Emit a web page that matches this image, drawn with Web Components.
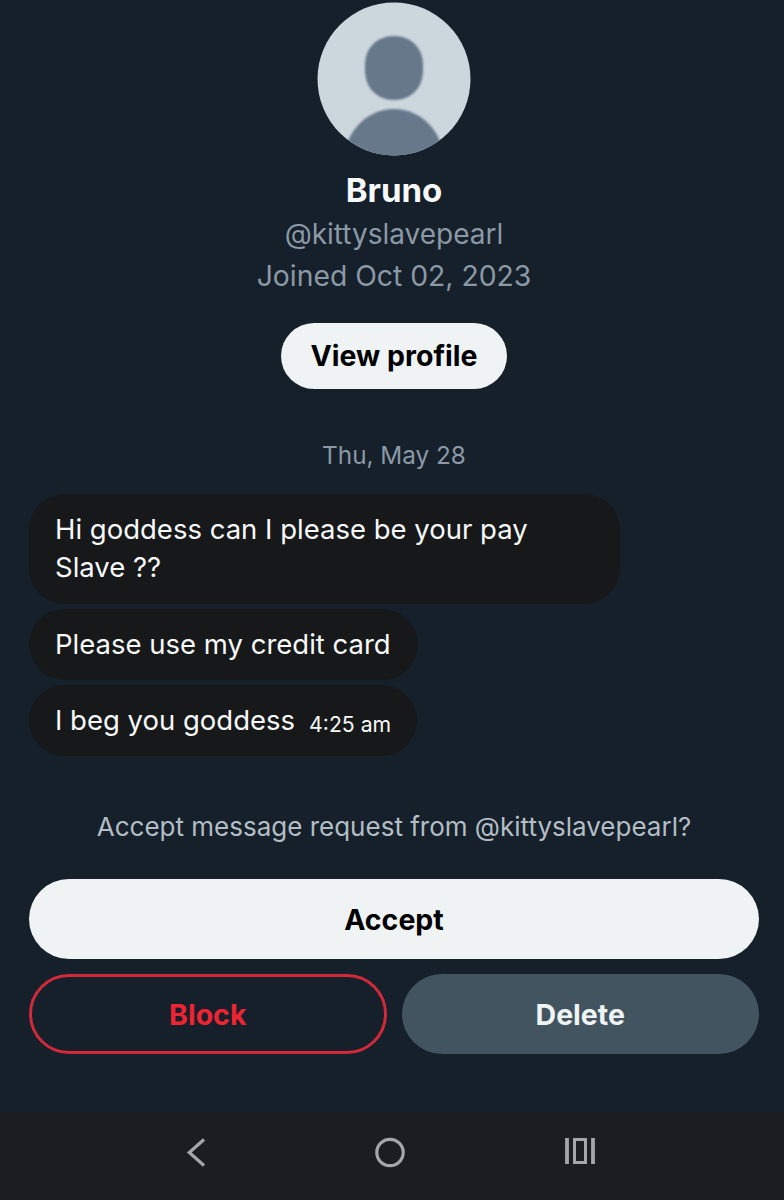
<!DOCTYPE html>
<html>
<head>
<meta charset="utf-8">
<style>
  html, body { margin: 0; padding: 0; }
  body {
    width: 784px;
    height: 1200px;
    overflow: hidden;
    background: #15202b;
    font-family: Inter, "Liberation Sans", sans-serif;
    display: flex;
    flex-direction: column;
  }
</style>
</head>
<body>
<dm-screen>
  <profile-head name="Bruno" handle="@kittyslavepearl" joined="Joined Oct 02, 2023"></profile-head>
  <day-label>Thu, May 28</day-label>
  <message-list>
    <chat-bubble style="width:591px;padding-bottom:18px">Hi goddess can I please be your pay<br>Slave ??</chat-bubble>
    <chat-bubble style="padding-right:27px">Please use my credit card</chat-bubble>
    <chat-bubble time="4:25 am">I beg you goddess</chat-bubble>
  </message-list>
  <request-actions handle="@kittyslavepearl"></request-actions>
</dm-screen>
<nav-bar></nav-bar>

<script>
class DmScreen extends HTMLElement {
  connectedCallback() {
    this.attachShadow({ mode: 'open' });
    this.shadowRoot.innerHTML = `
      <style>
        :host {
          display: flex;
          flex-direction: column;
          height: 1112px;
          box-sizing: border-box;
          padding: 2px 25px 0 29px;
          background: #15202b;
        }
      </style>
      <slot></slot>
    `;
  }
}

class ProfileHead extends HTMLElement {
  connectedCallback() {
    this.attachShadow({ mode: 'open' });
    this.shadowRoot.innerHTML = `
      <style>
        :host { display: flex; flex-direction: column; align-items: center; }
        svg { display: block; width: 154px; height: 154px; }
        .blur { filter: blur(1px); }
        .name { margin-top: 16px; font-size: 33px; line-height: 36px; font-weight: 700; color: #f7f9f9; }
        .sub { font-size: 28px; line-height: 41px; color: #8b98a5; }
        .handle { margin-top: 6px; }
        .joined { margin-top: 1px; font-size: 28.3px; }
        button {
          margin-top: 26px;
          width: 226px;
          height: 66px;
          padding: 0 0 1px;
          border: 0;
          border-radius: 33px;
          background: #eff3f4;
          color: #000;
          font: 700 28.5px Inter, "Liberation Sans", sans-serif;
        }
      </style>
      <svg viewBox="0 0 154 154">
        <defs><clipPath id="c"><circle cx="77" cy="77" r="76.5"/></clipPath></defs>
        <circle cx="77" cy="77" r="76.5" fill="#ccd6dd"/>
        <g clip-path="url(#c)" fill="#66788a">
          <g class="blur">
            <path d="M77 34c17 0 29 12 29 29v5c0 18-12 30-29 30s-29-12-29-30v-5c0-17 12-29 29-29z"/>
            <ellipse cx="77" cy="160" rx="50" ry="53"/>
          </g>
        </g>
      </svg>
      <div class="name">${this.getAttribute('name')}</div>
      <div class="sub handle">${this.getAttribute('handle')}</div>
      <div class="sub joined">${this.getAttribute('joined')}</div>
      <button>View profile</button>
    `;
  }
}

class DayLabel extends HTMLElement {
  connectedCallback() {
    this.attachShadow({ mode: 'open' });
    this.shadowRoot.innerHTML = `
      <style>
        :host {
          display: block;
          margin: 48px 0 21px;
          text-align: center;
          font-size: 24.3px;
          line-height: 36px;
          color: #8b98a5;
        }
      </style>
      <slot></slot>
    `;
  }
}

class MessageList extends HTMLElement {
  connectedCallback() {
    this.attachShadow({ mode: 'open' });
    this.shadowRoot.innerHTML = `
      <style>
        :host { display: flex; flex-direction: column; align-items: flex-start; gap: 5px; }
      </style>
      <slot></slot>
    `;
  }
}

class ChatBubble extends HTMLElement {
  connectedCallback() {
    const time = this.getAttribute('time');
    this.attachShadow({ mode: 'open' });
    this.shadowRoot.innerHTML = `
      <style>
        :host {
          display: block;
          box-sizing: border-box;
          padding: 16px 26px 17px;
          border-radius: 36px;
          background: #16181a;
          color: #f7f9f9;
          font-size: 27.5px;
          line-height: 38px;
          white-space: nowrap;
        }
        .time { margin-left: 14px; font-size: 21.2px; line-height: 1; vertical-align: -2px; }
      </style>
      <slot></slot>${time ? `<span class="time">${time}</span>` : ''}
    `;
  }
}

class RequestActions extends HTMLElement {
  connectedCallback() {
    this.attachShadow({ mode: 'open' });
    this.shadowRoot.innerHTML = `
      <style>
        :host { display: block; margin-top: 52px; }
        p {
          margin: 0 0 33px;
          text-align: center;
          font-size: 26px;
          line-height: 38px;
          color: #b3bdc4;
        }
        .row { display: grid; grid-template-columns: 1fr 1fr; gap: 15px; margin-top: 15px; }
        button {
          display: block;
          width: 100%;
          height: 80px;
          padding: 0;
          box-sizing: border-box;
          border: 0;
          border-radius: 40px;
          font: 700 28.5px Inter, "Liberation Sans", sans-serif;
        }
        .accept { background: #eff3f4; color: #000; }
        .row .block { background: transparent; border: 3px solid #d2293a; color: #ee2433; }
        .delete { background: #425460; color: #eff3f4; }
      </style>
      <p>Accept message request from ${this.getAttribute('handle')}?</p>
      <button class="accept">Accept</button>
      <div class="row">
        <button class="block">Block</button>
        <button class="delete">Delete</button>
      </div>
    `;
  }
}

class NavBar extends HTMLElement {
  connectedCallback() {
    this.attachShadow({ mode: 'open' });
    this.shadowRoot.innerHTML = `
      <style>
        :host {
          display: flex;
          align-items: flex-start;
          gap: 162px;
          height: 88px;
          box-sizing: border-box;
          padding: 25px 0 0 180px;
          background: #1c1d22;
        }
        svg { display: block; width: 32px; height: 32px; stroke: #a5a6aa; fill: none; }
        svg:last-child { margin-left: -4px; }
      </style>
      <svg viewBox="0 0 32 32"><path d="M24 2.5 9.3 15.5 24 28.5" stroke-width="3.2"/></svg>
      <svg viewBox="0 0 32 32"><circle cx="16" cy="15.5" r="13.2" stroke-width="3.2"/></svg>
      <svg viewBox="0 0 32 32"><path d="M3 1v26M29 1v26" stroke-width="3.8"/><rect x="10.5" y="2.5" width="11" height="23" stroke-width="3"/></svg>
    `;
  }
}

customElements.define('dm-screen', DmScreen);
customElements.define('profile-head', ProfileHead);
customElements.define('day-label', DayLabel);
customElements.define('message-list', MessageList);
customElements.define('chat-bubble', ChatBubble);
customElements.define('request-actions', RequestActions);
customElements.define('nav-bar', NavBar);
</script>
</body>
</html>
